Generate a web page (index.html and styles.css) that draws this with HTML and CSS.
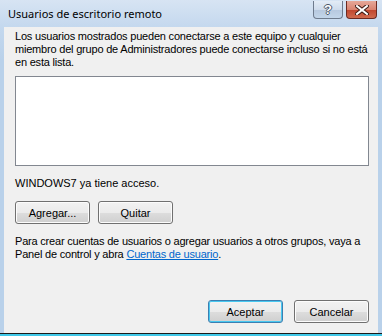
FILE: index.html
```html
<!DOCTYPE html>
<html lang="es">
<head>
  <meta charset="UTF-8">
  <title>Usuarios de escritorio remoto</title>
  <link rel="stylesheet" href="styles.css">
</head>
<body>
  <div class="window">
    <div class="titlebar">
      <span class="title">Usuarios de escritorio remoto</span>
      <div class="caption-buttons">
        <span class="caption-btn help">?</span>
        <span class="caption-btn close">
          <svg width="14" height="10" viewBox="0 0 14 10">
            <path d="M2 1 L12 9 M12 1 L2 9" stroke="#3c1a14" stroke-width="4" stroke-linecap="square" fill="none"/>
            <path d="M2 1 L12 9 M12 1 L2 9" stroke="#ffffff" stroke-width="2" stroke-linecap="square" fill="none"/>
          </svg>
        </span>
      </div>
    </div>

    <div class="client">
      <p class="intro">Los usuarios mostrados pueden conectarse a este equipo y cualquier<br>miembro del grupo de Administradores puede conectarse incluso si no está<br>en esta lista.</p>
      <div class="listbox"></div>
      <p class="status">WINDOWS7 ya tiene acceso.</p>
      <div class="button-row">
        <button class="btn">Agregar...</button>
        <button class="btn">Quitar</button>
      </div>
      <p class="hint">Para crear cuentas de usuarios o agregar usuarios a otros grupos, vaya a<br>Panel de control y abra <a href="#">Cuentas de usuario</a>.</p>
      <div class="footer">
        <button class="btn default">Aceptar</button>
        <button class="btn">Cancelar</button>
      </div>
    </div>
  </div>
  <div class="taskbar"></div>
</body>
</html>
```

FILE: styles.css
```css
body {
  margin: 0;
  background: #b9d1ea;
  font-family: 'Liberation Sans', Arial, sans-serif;
  font-size: 11px;
  color: #000;
}

.window {
  width: 382px;
  height: 333px;
  display: flex;
  flex-direction: column;
  background: linear-gradient(to bottom, #d7e4f3 0, #c4d8ee 27px, #b9d1ea 60px);
}

.titlebar {
  height: 27px;
  display: flex;
  justify-content: space-between;
  align-items: flex-start;
}

.title {
  font-family: 'Noto Sans', sans-serif;
  font-size: 11px;
  padding: 6px 0 0 8px;
  color: #000;
}

.caption-buttons {
  display: flex;
  gap: 3px;
  padding: 1px 5px 0 0;
}

.caption-btn {
  height: 17px;
  border: 1px solid #6e7b8d;
  border-top: none;
  border-radius: 0 0 4px 4px;
  display: flex;
  align-items: center;
  justify-content: center;
}

.help {
  width: 28px;
  background: linear-gradient(to bottom, #e3ecf6 0, #cfdcec 50%, #b6c8de 51%, #c3d6ea 100%);
  font-family: 'Liberation Sans', sans-serif;
  font-weight: bold;
  font-size: 13px;
  color: #fff;
  text-shadow: -1px 0 #4a5668, 1px 0 #4a5668, 0 -1px #4a5668, 0 1px #4a5668;
}

.close {
  width: 29px;
  border-color: #6b2a22;
  background: linear-gradient(to bottom, #e6a899 0, #d98370 50%, #c0442c 51%, #d06b4f 100%);
}

.client {
  flex: 1;
  margin: 0 4px;
  background: #f0f0f0;
  padding: 3px 4px 10px 11px;
  display: flex;
  flex-direction: column;
  line-height: 13px;
}

.client p {
  margin: 0;
}

.intro {
  white-space: nowrap;
  letter-spacing: -0.2px;
}

.listbox {
  width: 352px;
  height: 88px;
  margin-top: 7px;
  background: #fff;
  border: 1px solid #828790;
}

.status {
  margin-top: 11px !important;
}

.button-row {
  display: flex;
  gap: 8px;
  margin-top: 11px;
}

.btn {
  width: 75px;
  height: 23px;
  padding: 0;
  font-family: 'Liberation Sans', Arial, sans-serif;
  font-size: 11px;
  color: #000;
  border: 1px solid #707070;
  border-radius: 3px;
  background: linear-gradient(to bottom, #f2f2f2 0, #ebebeb 50%, #dddddd 51%, #cfcfcf 100%);
  box-shadow: inset 0 0 0 1px #fcfcfc;
}

.btn.default {
  border-color: #3c7fb1;
  box-shadow: inset 0 0 0 1px #48c8f0;
}

.hint {
  margin-top: 11px !important;
  white-space: nowrap;
  letter-spacing: -0.2px;
}

.hint a {
  color: #0066cc;
  text-decoration: underline;
}

.footer {
  margin-top: auto;
  margin-right: 5px;
  display: flex;
  justify-content: flex-end;
  gap: 11px;
}

.taskbar {
  height: 3px;
  background: #3fc8e8;
  border-top: 1px solid #1a1a1a;
  box-sizing: border-box;
}
```
